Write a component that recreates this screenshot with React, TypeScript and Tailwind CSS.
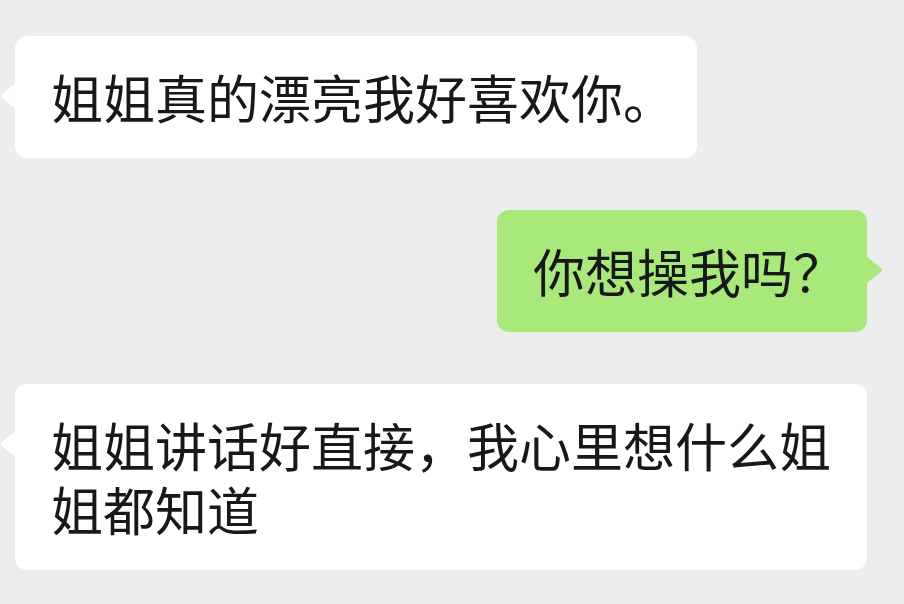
import type { ReactNode } from 'react'

function Bubble({ side, children }: { side: 'left' | 'right'; children: ReactNode }) {
  const mine = side === 'right'
  return (
    <div className={mine ? 'flex justify-end pr-[37px]' : 'flex justify-start pl-[15px]'}>
      <div
        className={
          'relative max-w-[852px] rounded-[12px] pl-[36px] pr-[22px] py-[29px] text-[52px] leading-[64px] text-[#181818] ' +
          (mine ? 'bg-[#a9e87a]' : 'bg-white')
        }
      >
        {mine ? (
          <svg className="absolute right-[-17px] top-[45px]" width="18" height="30" viewBox="0 0 18 30">
            <path d="M0 1 L15.5 13.5 Q17 15 15.5 16.5 L0 29 Z" fill="#a9e87a" />
          </svg>
        ) : (
          <svg className="absolute left-[-15px] top-[46px]" width="16" height="28" viewBox="0 0 16 28">
            <path d="M16 1 L1.5 12.5 Q0 14 1.5 15.5 L16 27 Z" fill="#ffffff" />
          </svg>
        )}
        {children}
      </div>
    </div>
  )
}

export default function App() {
  return (
    <div
      className="flex h-[604px] w-[904px] flex-col gap-[52px] overflow-hidden bg-[#ededed] pt-[36px]"
      style={{ fontFamily: '"Noto Sans CJK SC", "Noto Sans", sans-serif' }}
    >
      <Bubble side="left">姐姐真的漂亮我好喜欢你。</Bubble>
      <Bubble side="right">你想操我吗？</Bubble>
      <Bubble side="left">姐姐讲话好直接，我心里想什么姐姐都知道</Bubble>
    </div>
  )
}
